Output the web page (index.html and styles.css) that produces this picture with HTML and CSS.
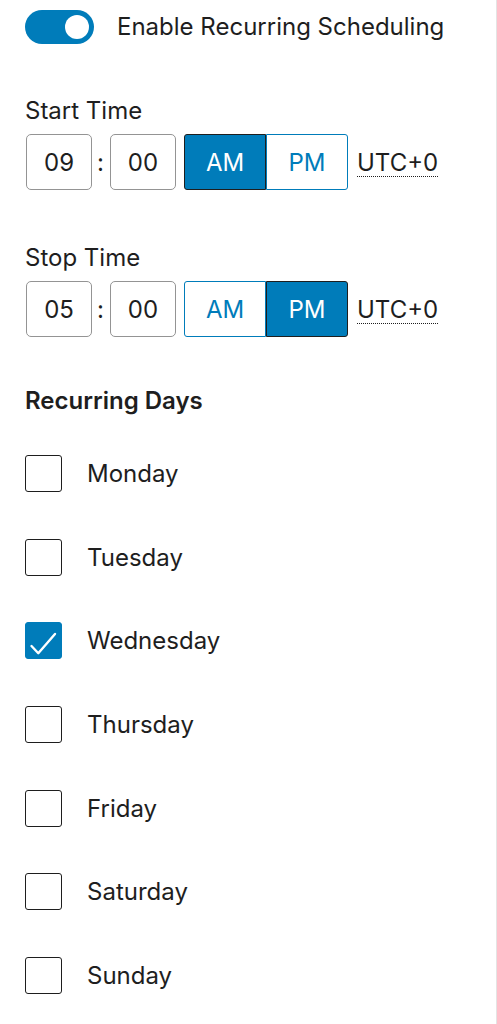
FILE: index.html
```html
<!DOCTYPE html>
<html>
<head>
  <meta charset="utf-8">
  <title>Recurring Scheduling</title>
  <link rel="stylesheet" href="styles.css">
</head>
<body>
  <div class="panel">
    <div class="toggleRow">
      <span class="toggle is-on"><span class="toggleKnob"></span></span>
      <span class="toggleLabel">Enable Recurring Scheduling</span>
    </div>

    <div class="timeField">
      <div class="fieldLabel">Start Time</div>
      <div class="timeRow">
        <input class="timeInput" type="text" value="09">
        <span class="timeColon">:</span>
        <input class="timeInput" type="text" value="00">
        <div class="ampm">
          <button class="ampmBtn is-pressed">AM</button>
          <button class="ampmBtn">PM</button>
        </div>
        <abbr class="timezone" title="Coordinated Universal Time">UTC+0</abbr>
      </div>
    </div>

    <div class="timeField">
      <div class="fieldLabel">Stop Time</div>
      <div class="timeRow">
        <input class="timeInput" type="text" value="05">
        <span class="timeColon">:</span>
        <input class="timeInput" type="text" value="00">
        <div class="ampm">
          <button class="ampmBtn">AM</button>
          <button class="ampmBtn is-pressed">PM</button>
        </div>
        <abbr class="timezone" title="Coordinated Universal Time">UTC+0</abbr>
      </div>
    </div>

    <h2 class="daysTitle">Recurring Days</h2>
    <ul class="dayList">
      <li class="dayItem"><span class="checkbox"></span>Monday</li>
      <li class="dayItem"><span class="checkbox"></span>Tuesday</li>
      <li class="dayItem">
        <span class="checkbox is-checked">
          <svg viewBox="0 0 37 37" width="37" height="37"><path d="M6.5 24l6.8 7.2L30 12" fill="none" stroke="#fff" stroke-width="2.4" stroke-linecap="round" stroke-linejoin="round"/></svg>
        </span>Wednesday
      </li>
      <li class="dayItem"><span class="checkbox"></span>Thursday</li>
      <li class="dayItem"><span class="checkbox"></span>Friday</li>
      <li class="dayItem"><span class="checkbox"></span>Saturday</li>
      <li class="dayItem"><span class="checkbox"></span>Sunday</li>
    </ul>
  </div>
</body>
</html>
```

FILE: styles.css
```css
html, body {
  margin: 0;
  height: 100%;
}
body {
  background-color: #fff;
  color: #1e1e1e;
  font-family: Inter, "Liberation Sans", sans-serif;
  font-size: 24px;
}
.panel {
  box-sizing: border-box;
  width: 497px;
  min-height: 100%;
  padding: 10px 0 0 25px;
  border-right: 1px solid #e4e4e4;
}

/* toggle */
.toggleRow {
  display: flex;
  align-items: center;
  gap: 23px;
  height: 34px;
}
.toggle {
  position: relative;
  display: inline-block;
  width: 69px;
  height: 34px;
  border-radius: 17px;
  background: #007cba;
}
.toggleKnob {
  position: absolute;
  top: 5px;
  right: 5px;
  width: 24px;
  height: 24px;
  border-radius: 50%;
  background: #fff;
}
.toggleLabel {
  line-height: 34px;
}

/* time pickers */
.timeField {
  margin-top: 53px;
}
.timeField + .timeField {
  margin-top: 54px;
}
.fieldLabel {
  line-height: 28px;
  margin-bottom: 9px;
}
.timeRow {
  display: flex;
  align-items: center;
  height: 56px;
}
.timeInput {
  box-sizing: border-box;
  width: 66px;
  height: 56px;
  margin: 0 0 0 1px;
  padding: 0;
  border: 1.5px solid #949494;
  border-radius: 5px;
  font: inherit;
  color: #1e1e1e;
  text-align: center;
}
.timeColon {
  width: 17px;
  text-align: center;
  color: #1e1e1e;
}
.ampm {
  display: flex;
  margin-left: 8px;
}
.ampmBtn {
  box-sizing: border-box;
  width: 82px;
  height: 56px;
  margin: 0;
  padding: 0;
  border: 1.5px solid #007cba;
  background: #fff;
  color: #007cba;
  font: inherit;
}
.ampmBtn:first-child {
  border-radius: 3px 0 0 3px;
}
.ampmBtn:last-child {
  border-radius: 0 3px 3px 0;
}
.ampmBtn.is-pressed {
  background: #007cba;
  color: #fff;
  border-color: #1e1e1e;
}
.timezone {
  margin-left: 9px;
  text-decoration: underline dotted;
  text-underline-offset: 5px;
  text-decoration-thickness: 1px;
}

/* days */
.daysTitle {
  margin: 50px 0 0;
  font-size: 24px;
  font-weight: 600;
  line-height: 28px;
}
.dayList {
  list-style: none;
  margin: 40px 0 0;
  padding: 0;
}
.dayItem {
  display: flex;
  align-items: center;
  height: 37px;
  margin-bottom: 46.7px;
}
.checkbox {
  box-sizing: border-box;
  display: inline-block;
  width: 37px;
  height: 37px;
  margin-right: 25px;
  border: 1.5px solid #1e1e1e;
  border-radius: 3px;
  background: #fff;
}
.checkbox.is-checked {
  border-color: #007cba;
  background: #007cba;
}
.checkbox svg {
  display: block;
  margin: -1.5px;
}
```
